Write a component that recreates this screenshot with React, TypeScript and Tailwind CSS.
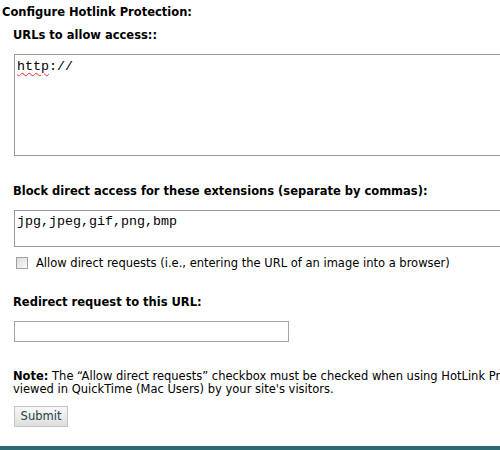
export default function App() {
  return (
    <div className="w-[500px] h-[450px] overflow-hidden bg-white flex flex-col text-[11.5px] leading-[14px] text-black font-['DejaVu_Sans',Verdana,sans-serif]">
      <h1 className="pt-[5px] pl-[2px] font-bold">Configure Hotlink Protection:</h1>

      <div className="pl-[14px]">
        <p className="mt-[9px] -ml-px font-bold">URLs to allow access::</p>
        <div className="mt-[12px] w-[520px] h-[102px] border border-[#999] px-[2px] pt-[4px] font-['Liberation_Mono',monospace] text-[13.33px] leading-[15px]">
          <span className="underline decoration-wavy decoration-red-500 decoration-1 underline-offset-2">http</span>://
        </div>

        <p className="mt-[28px] -ml-px font-bold">Block direct access for these extensions (separate by commas):</p>
        <div className="mt-[12px] w-[520px] h-[37px] border border-[#999] px-[2px] pt-[3px] font-['Liberation_Mono',monospace] text-[13.33px] leading-[15px]">
          jpg,jpeg,gif,png,bmp
        </div>

        <div className="mt-[9px] flex items-center gap-[8px] whitespace-nowrap">
          <span className="ml-[2px] w-[12px] h-[12px] border border-[#a0a0a0] bg-gradient-to-br from-[#dcdcdc] to-[#fbfbfb]" />
          <span>Allow direct requests (i.e., entering the URL of an image into a browser)</span>
        </div>

        <p className="mt-[25px] -ml-px font-bold">Redirect request to this URL:</p>
        <div className="mt-[12px] w-[275px] h-[21px] border border-[#a5a5a5]" />

        <p className="mt-[28px] -ml-px leading-[13px] whitespace-nowrap">
          <span className="font-bold">Note:</span> The “Allow direct requests” checkbox must be checked when using HotLink Protection and images need to be
          <br />
          viewed in QuickTime (Mac Users) by your site's visitors.
        </p>

        <button className="mt-[10px] w-[54px] h-[21px] border border-[#c4c4c4] bg-gradient-to-b from-[#f8f8f8] to-[#dedede] text-[#23404c] text-[11.5px] leading-[19px] text-center">
          Submit
        </button>
      </div>

      <div className="mt-auto h-[4px] bg-[#2d6a72]" />
    </div>
  );
}
